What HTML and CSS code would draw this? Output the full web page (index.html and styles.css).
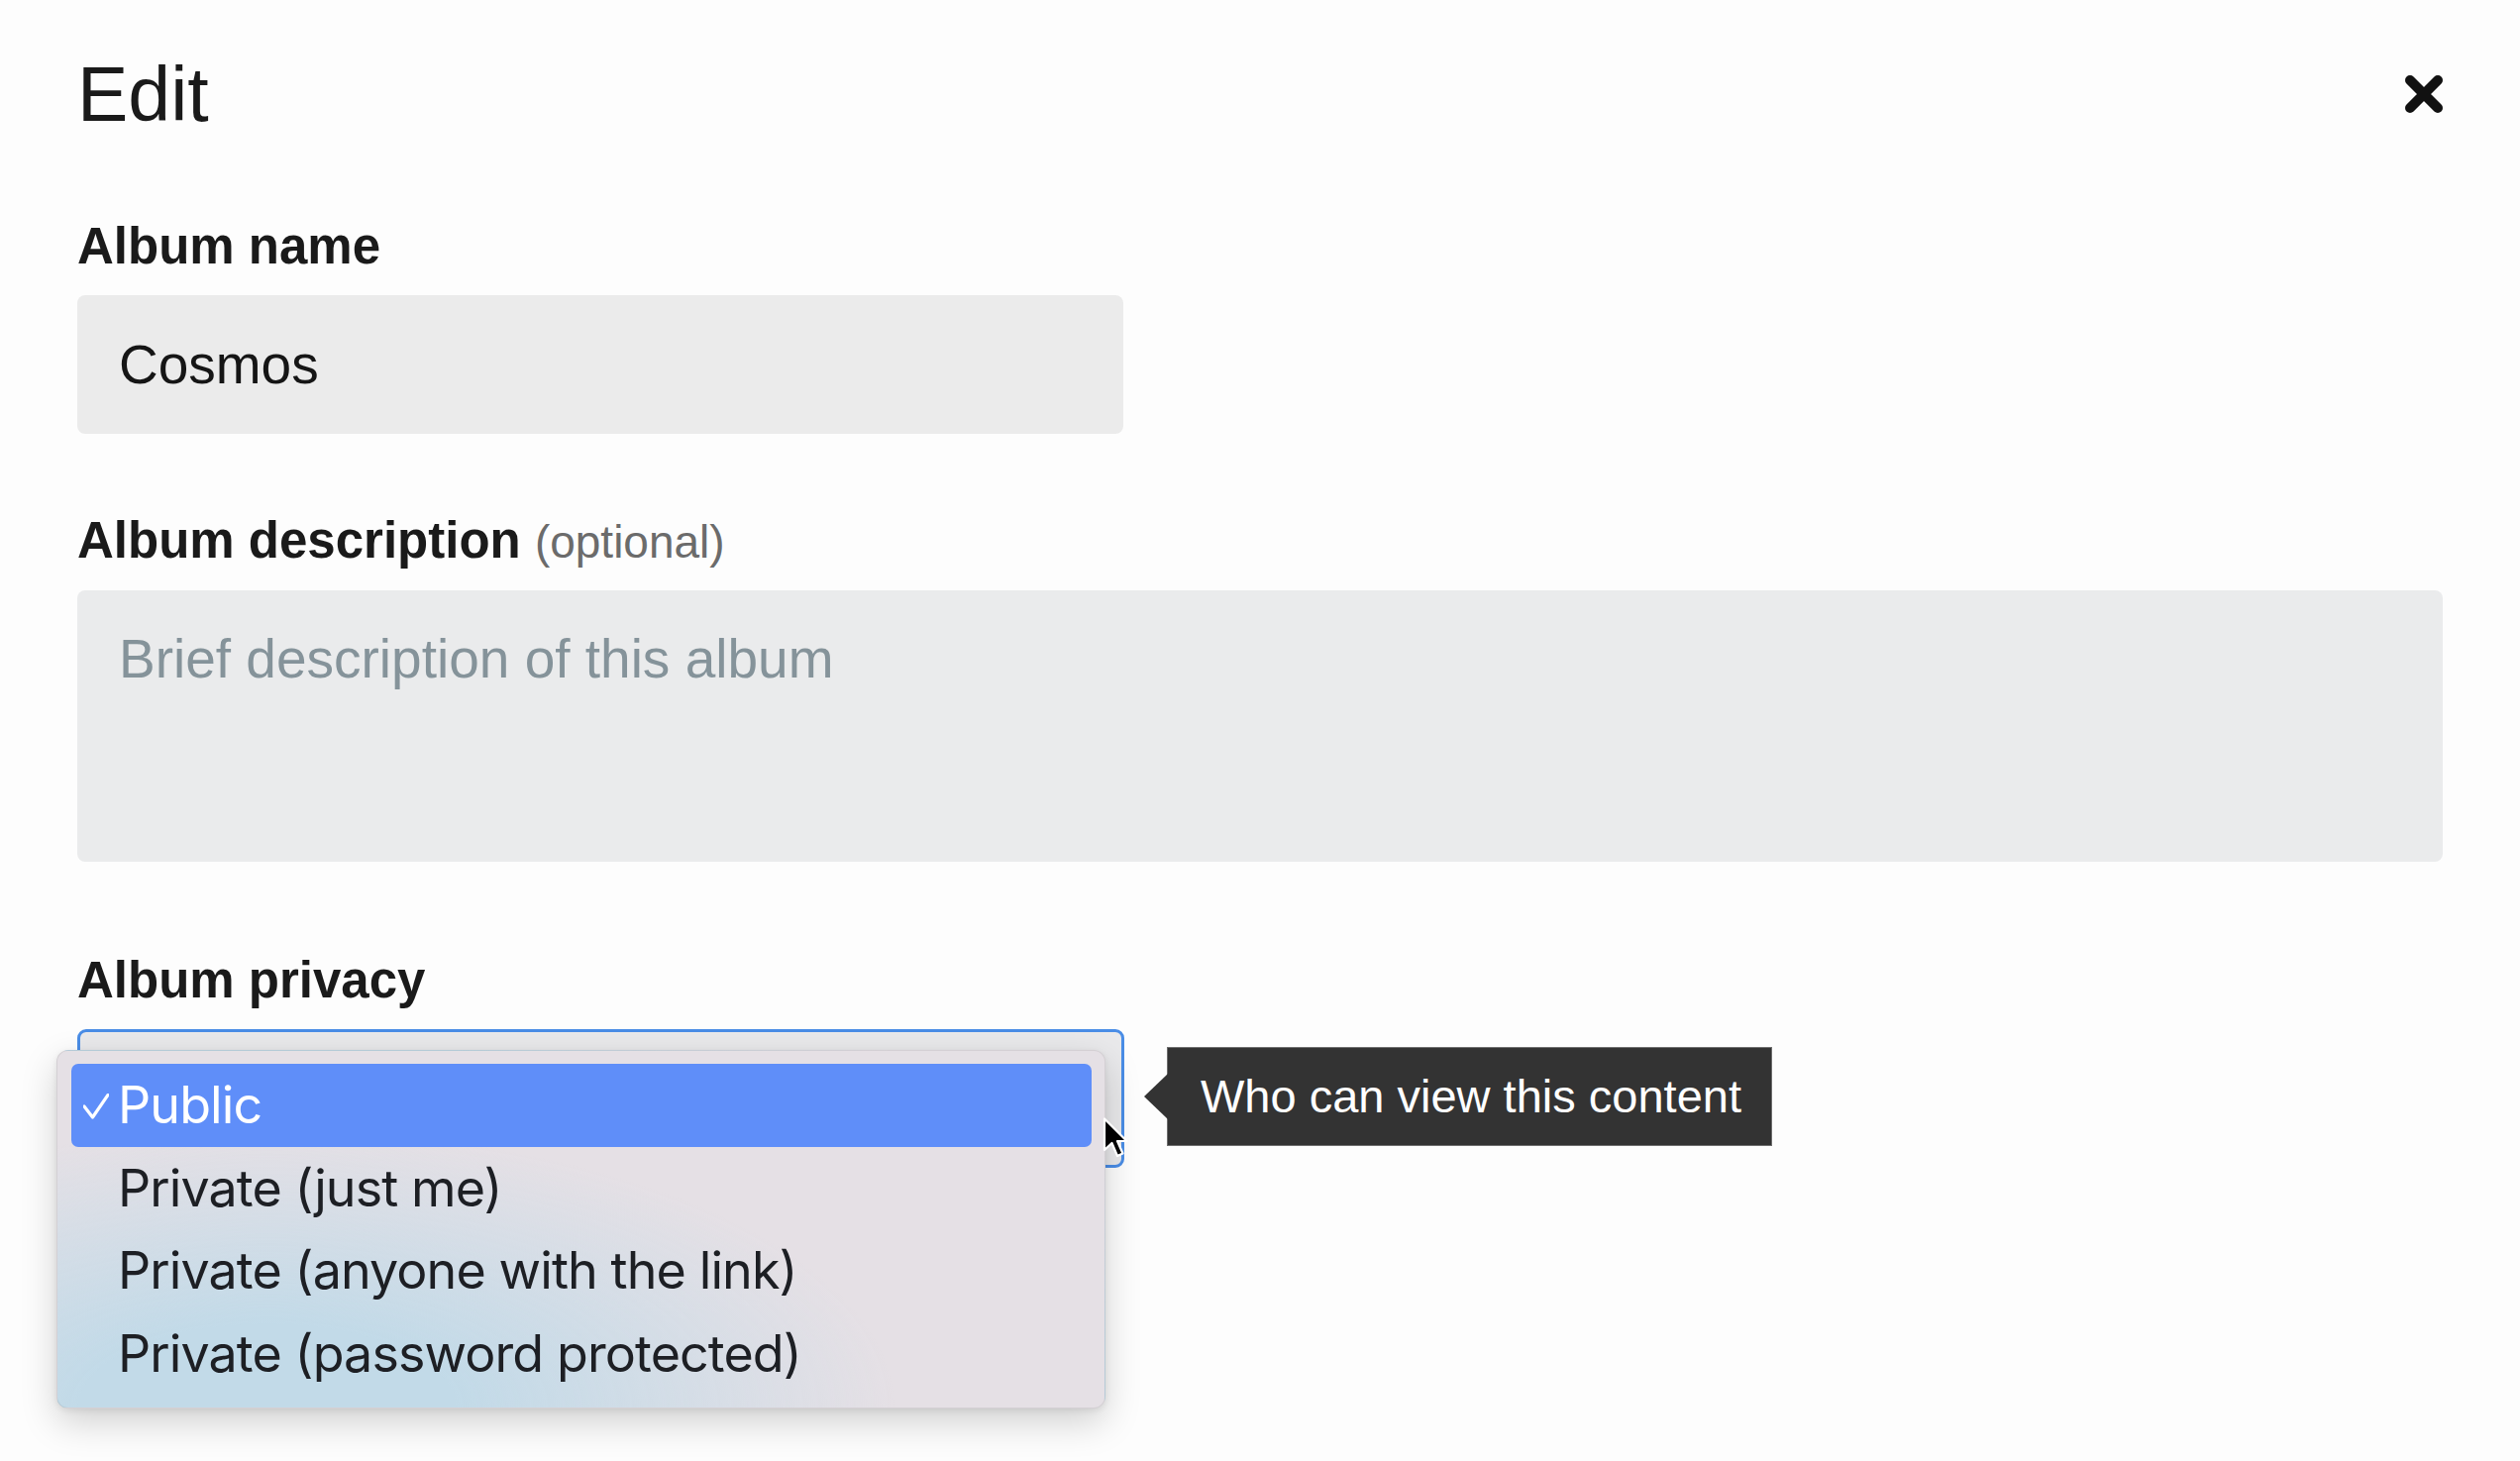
FILE: index.html
```html
<!DOCTYPE html>
<html lang="en">
<head>
<meta charset="utf-8">
<title>Edit album</title>
<link rel="stylesheet" href="styles.css">
</head>
<body>
<div class="modal">
  <header class="modal-header">
    <h1 class="title">Edit</h1>
    <button class="close" aria-label="Close">
      <svg width="38" height="38" viewBox="0 0 38 38"><path d="M5 5 L33 33 M33 5 L5 33" stroke="#111" stroke-width="10" stroke-linecap="round" fill="none"/></svg>
    </button>
  </header>

  <div class="field">
    <label class="label">Album name</label>
    <input class="input" type="text" value="Cosmos">
  </div>

  <div class="field field-desc">
    <label class="label">Album description <span class="optional">(optional)</span></label>
    <textarea class="textarea" placeholder="Brief description of this album"></textarea>
  </div>

  <div class="field field-privacy">
    <label class="label">Album privacy</label>
    <div class="select-wrap">
      <div class="select"></div>
      <ul class="menu">
        <li class="menu-item selected">
          <svg class="check" width="26" height="26" viewBox="0 0 26 26"><path d="M1 13 L9.5 24 L25 1.5" stroke="#fff" stroke-width="3.2" fill="none" stroke-linecap="round" stroke-linejoin="round"/></svg>
          Public
        </li>
        <li class="menu-item">Private (just me)</li>
        <li class="menu-item">Private (anyone with the link)</li>
        <li class="menu-item">Private (password protected)</li>
      </ul>
      <div class="tooltip">Who can view this content</div>
      <svg class="cursor" width="26" height="44" viewBox="0 0 26 44"><path d="M2 1.5 L2 33 L9.5 26 L15 39 L20.5 36.5 L15 24 L24.5 24 Z" fill="#000" stroke="#fff" stroke-width="2.2" stroke-linejoin="round"/></svg>
    </div>
  </div>
</div>
</body>
</html>
```

FILE: styles.css
```css
html, body {
  margin: 0;
  padding: 0;
}
body {
  background: #fdfdfd;
  font-family: "Liberation Sans", Arial, sans-serif;
  color: #1a1a1a;
  width: 2544px;
  height: 1475px;
  overflow: hidden;
}
.modal {
  padding: 57px 78px 0 78px;
}
.modal-header {
  display: flex;
  justify-content: space-between;
  align-items: center;
}
.title {
  margin: 0;
  font-size: 77px;
  line-height: 76px;
  font-weight: 400;
  color: #1a1a1a;
}
.close {
  border: none;
  background: none;
  padding: 0;
  width: 38px;
  height: 38px;
  display: block;
}
.close svg {
  display: block;
}
.field {
  display: flex;
  flex-direction: column;
  gap: 19px;
  margin-top: 86px;
}
.field-desc {
  margin-top: 78px;
}
.field-privacy {
  margin-top: 90px;
}
.label {
  display: block;
  font-size: 51px;
  line-height: 60px;
  font-weight: 700;
  color: #1a1a1a;
}
.optional {
  font-weight: 400;
  font-size: 46px;
  color: #6b6b6b;
}
.input {
  box-sizing: border-box;
  width: 1056px;
  height: 140px;
  border: none;
  border-radius: 8px;
  background: #ebebeb;
  padding: 0 42px;
  font-family: "Liberation Sans", Arial, sans-serif;
  font-size: 55px;
  color: #151515;
  outline: none;
  margin: 0;
}
.textarea {
  box-sizing: border-box;
  width: 100%;
  height: 274px;
  border: none;
  border-radius: 8px;
  background: #eaebec;
  padding: 37px 42px;
  font-family: "Liberation Sans", Arial, sans-serif;
  font-size: 55px;
  line-height: 64px;
  resize: none;
  outline: none;
  margin: 0;
  display: block;
}
.textarea::placeholder {
  color: #85939a;
}
.select-wrap {
  position: relative;
  width: 1057px;
}
.select {
  box-sizing: border-box;
  height: 140px;
  border: 3px solid #4a8de6;
  border-radius: 9px;
  background: #e9e9eb;
}
.menu {
  position: absolute;
  left: -21px;
  top: 21px;
  width: 1059px;
  box-sizing: border-box;
  margin: 0;
  padding: 13px 13px 13px 14px;
  list-style: none;
  border-radius: 12px;
  border: 1px solid rgba(0, 0, 0, 0.07);
  background:
    radial-gradient(ellipse 60% 78% at 20% 100%, rgba(194, 218, 232, 1) 30%, rgba(194, 218, 232, 0) 100%),
    #e5e0e5;
  box-shadow: 0 14px 36px rgba(0, 0, 0, 0.18), 0 2px 6px rgba(0, 0, 0, 0.08);
  font-family: Inter, "Noto Sans", sans-serif;
}
.menu-item {
  position: relative;
  height: 83.5px;
  line-height: 83.5px;
  padding-left: 47px;
  font-size: 52px;
  color: #1d1f24;
  border-radius: 7px;
  letter-spacing: -0.9px;
}
.menu-item.selected {
  background: #5f8ef9;
  color: #ffffff;
}
.check {
  position: absolute;
  left: 12px;
  top: 30px;
}
.tooltip {
  position: absolute;
  left: calc(100% + 43px);
  top: 18px;
  height: 100px;
  box-sizing: border-box;
  padding: 0 30px 0 33px;
  line-height: 98px;
  background: #333333;
  border: 1px solid #6e6e6e;
  color: #ffffff;
  font-size: 47px;
  white-space: nowrap;
}
.tooltip::before {
  content: "";
  position: absolute;
  left: -24px;
  top: 26px;
  border-right: 24px solid #333333;
  border-top: 23px solid transparent;
  border-bottom: 23px solid transparent;
}
.cursor {
  position: absolute;
  left: 1035px;
  top: 89px;
}
```
